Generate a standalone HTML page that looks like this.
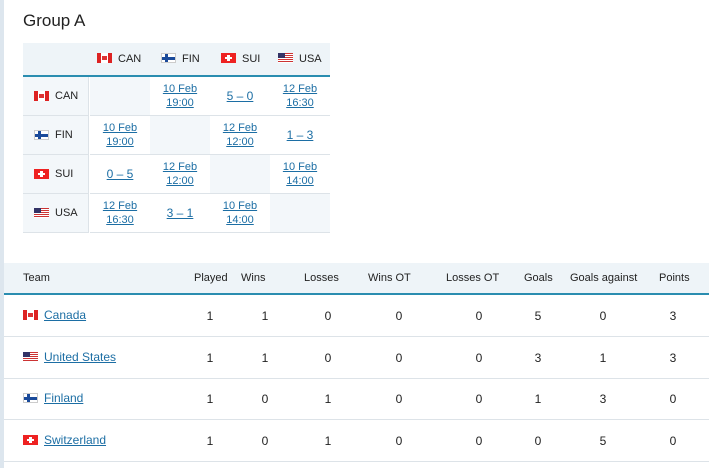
<!DOCTYPE html>
<html><head><meta charset="utf-8"><style>
*{margin:0;padding:0;box-sizing:border-box}
body{width:709px;height:468px;background:#fff;font-family:"Liberation Sans",Arial,sans-serif;font-size:11px;color:#222;position:relative;overflow:hidden}
.edge{position:absolute;left:0;top:0;width:4px;height:468px;background:#dde6ee}
.abs{position:absolute}
a{color:#1c6ea4;text-decoration:underline}
.flag{display:inline-block;width:15px;height:10px;vertical-align:-1px;margin-right:6px;position:relative}
.can{background:linear-gradient(90deg,#d22 0 4px,#fff 4px 11px,#d22 11px)}
.can::after{content:"";position:absolute;left:5px;top:3px;width:5px;height:4px;background:#d33}
.fin{background:#fff;border:1px solid #ccc}
.fin::before{content:"";position:absolute;left:0;right:0;top:3px;height:3px;background:#1a4a9a}
.fin::after{content:"";position:absolute;left:3px;top:0;bottom:0;width:3px;background:#1a4a9a}
.sui{background:#e22}
.sui::before{content:"";position:absolute;left:6px;top:2px;width:3px;height:6px;background:#fff}
.sui::after{content:"";position:absolute;left:4px;top:4px;width:7px;height:2px;background:#fff}
.usa{background:repeating-linear-gradient(#c33 0 1px,#fff 1px 2px)}
.usa::after{content:"";position:absolute;left:0;top:0;width:7px;height:5px;background:#336}
.cell{position:absolute;display:flex;align-items:center;justify-content:center;text-align:center;line-height:14px;border-bottom:1px solid #dde3e8}
.big{font-size:12px}
</style></head><body>
<div class="edge"></div>
<div class="abs" style="left:23px;top:11px;font-size:17px;color:#222">Group A</div>

<!-- matrix -->
<div class="abs" style="left:23px;top:43px;width:307px;height:32px;background:#eef4f8"></div>
<div class="abs" style="left:23px;top:75px;width:307px;height:2px;background:#2a8db0"></div>
<div class="abs" style="left:23px;top:77px;width:66px;height:155px;background:#f3f7fa;border-right:1px solid #dde3e8"></div>
<div class="abs" style="left:97px;top:53px"><span class="flag can"></span>CAN</div>
<div class="abs" style="left:161px;top:53px"><span class="flag fin"></span>FIN</div>
<div class="abs" style="left:221px;top:53px"><span class="flag sui"></span>SUI</div>
<div class="abs" style="left:278px;top:53px"><span class="flag usa"></span>USA</div>

<div class="cell" style="left:23px;top:77px;width:66px;height:39px;justify-content:flex-start;padding-left:11px"><span class="flag can"></span>CAN</div>
<div class="cell" style="left:23px;top:116px;width:66px;height:39px;justify-content:flex-start;padding-left:11px"><span class="flag fin"></span>FIN</div>
<div class="cell" style="left:23px;top:155px;width:66px;height:39px;justify-content:flex-start;padding-left:11px"><span class="flag sui"></span>SUI</div>
<div class="cell" style="left:23px;top:194px;width:66px;height:39px;justify-content:flex-start;padding-left:11px"><span class="flag usa"></span>USA</div>

<div class="cell" style="left:90px;top:77px;width:60px;height:39px;background:#f3f7fa"></div>
<div class="cell" style="left:150px;top:77px;width:60px;height:39px"><a>10 Feb<br>19:00</a></div>
<div class="cell big" style="left:210px;top:77px;width:60px;height:39px"><a>5 – 0</a></div>
<div class="cell" style="left:270px;top:77px;width:60px;height:39px"><a>12 Feb<br>16:30</a></div>

<div class="cell" style="left:90px;top:116px;width:60px;height:39px"><a>10 Feb<br>19:00</a></div>
<div class="cell" style="left:150px;top:116px;width:60px;height:39px;background:#f3f7fa"></div>
<div class="cell" style="left:210px;top:116px;width:60px;height:39px"><a>12 Feb<br>12:00</a></div>
<div class="cell big" style="left:270px;top:116px;width:60px;height:39px"><a>1 – 3</a></div>

<div class="cell big" style="left:90px;top:155px;width:60px;height:39px"><a>0 – 5</a></div>
<div class="cell" style="left:150px;top:155px;width:60px;height:39px"><a>12 Feb<br>12:00</a></div>
<div class="cell" style="left:210px;top:155px;width:60px;height:39px;background:#f3f7fa"></div>
<div class="cell" style="left:270px;top:155px;width:60px;height:39px"><a>10 Feb<br>14:00</a></div>

<div class="cell" style="left:90px;top:194px;width:60px;height:39px"><a>12 Feb<br>16:30</a></div>
<div class="cell big" style="left:150px;top:194px;width:60px;height:39px"><a>3 – 1</a></div>
<div class="cell" style="left:210px;top:194px;width:60px;height:39px"><a>10 Feb<br>14:00</a></div>
<div class="cell" style="left:270px;top:194px;width:60px;height:39px;background:#f3f7fa"></div>

<!-- standings -->
<div class="abs" style="left:4px;top:263px;width:705px;height:30px;background:#eef4f8"></div>
<div class="abs" style="left:4px;top:293px;width:705px;height:2px;background:#2a8db0"></div>
<div class="abs" style="top:272px;left:23px">Team</div>
<div class="abs" style="top:272px;left:194px">Played</div>
<div class="abs" style="top:272px;left:241px">Wins</div>
<div class="abs" style="top:272px;left:304px">Losses</div>
<div class="abs" style="top:272px;left:368px">Wins OT</div>
<div class="abs" style="top:272px;left:446px">Losses OT</div>
<div class="abs" style="top:272px;left:524px">Goals</div>
<div class="abs" style="top:272px;left:570px">Goals against</div>
<div class="abs" style="top:272px;left:659px">Points</div>

<div id="rows"></div>
<style>
.r{position:absolute;left:4px;width:705px;height:42px;border-bottom:1px solid #dde3e8;font-size:12px}
.r span.n{position:absolute;top:14px;width:20px;margin-left:-10px;text-align:center}
.r .t{position:absolute;left:19px;top:13px}
</style>
<div class="r" style="top:295px"><div class="t"><span class="flag can"></span><a>Canada</a></div>
<span class="n" style="left:206px">1</span><span class="n" style="left:261px">1</span><span class="n" style="left:324px">0</span><span class="n" style="left:395px">0</span><span class="n" style="left:475px">0</span><span class="n" style="left:534px">5</span><span class="n" style="left:599px">0</span><span class="n" style="left:669px">3</span></div>
<div class="r" style="top:337px"><div class="t"><span class="flag usa"></span><a>United States</a></div>
<span class="n" style="left:206px">1</span><span class="n" style="left:261px">1</span><span class="n" style="left:324px">0</span><span class="n" style="left:395px">0</span><span class="n" style="left:475px">0</span><span class="n" style="left:534px">3</span><span class="n" style="left:599px">1</span><span class="n" style="left:669px">3</span></div>
<div class="r" style="top:378px"><div class="t"><span class="flag fin"></span><a>Finland</a></div>
<span class="n" style="left:206px">1</span><span class="n" style="left:261px">0</span><span class="n" style="left:324px">1</span><span class="n" style="left:395px">0</span><span class="n" style="left:475px">0</span><span class="n" style="left:534px">1</span><span class="n" style="left:599px">3</span><span class="n" style="left:669px">0</span></div>
<div class="r" style="top:420px"><div class="t"><span class="flag sui"></span><a>Switzerland</a></div>
<span class="n" style="left:206px">1</span><span class="n" style="left:261px">0</span><span class="n" style="left:324px">1</span><span class="n" style="left:395px">0</span><span class="n" style="left:475px">0</span><span class="n" style="left:534px">0</span><span class="n" style="left:599px">5</span><span class="n" style="left:669px">0</span></div>
</body></html>
